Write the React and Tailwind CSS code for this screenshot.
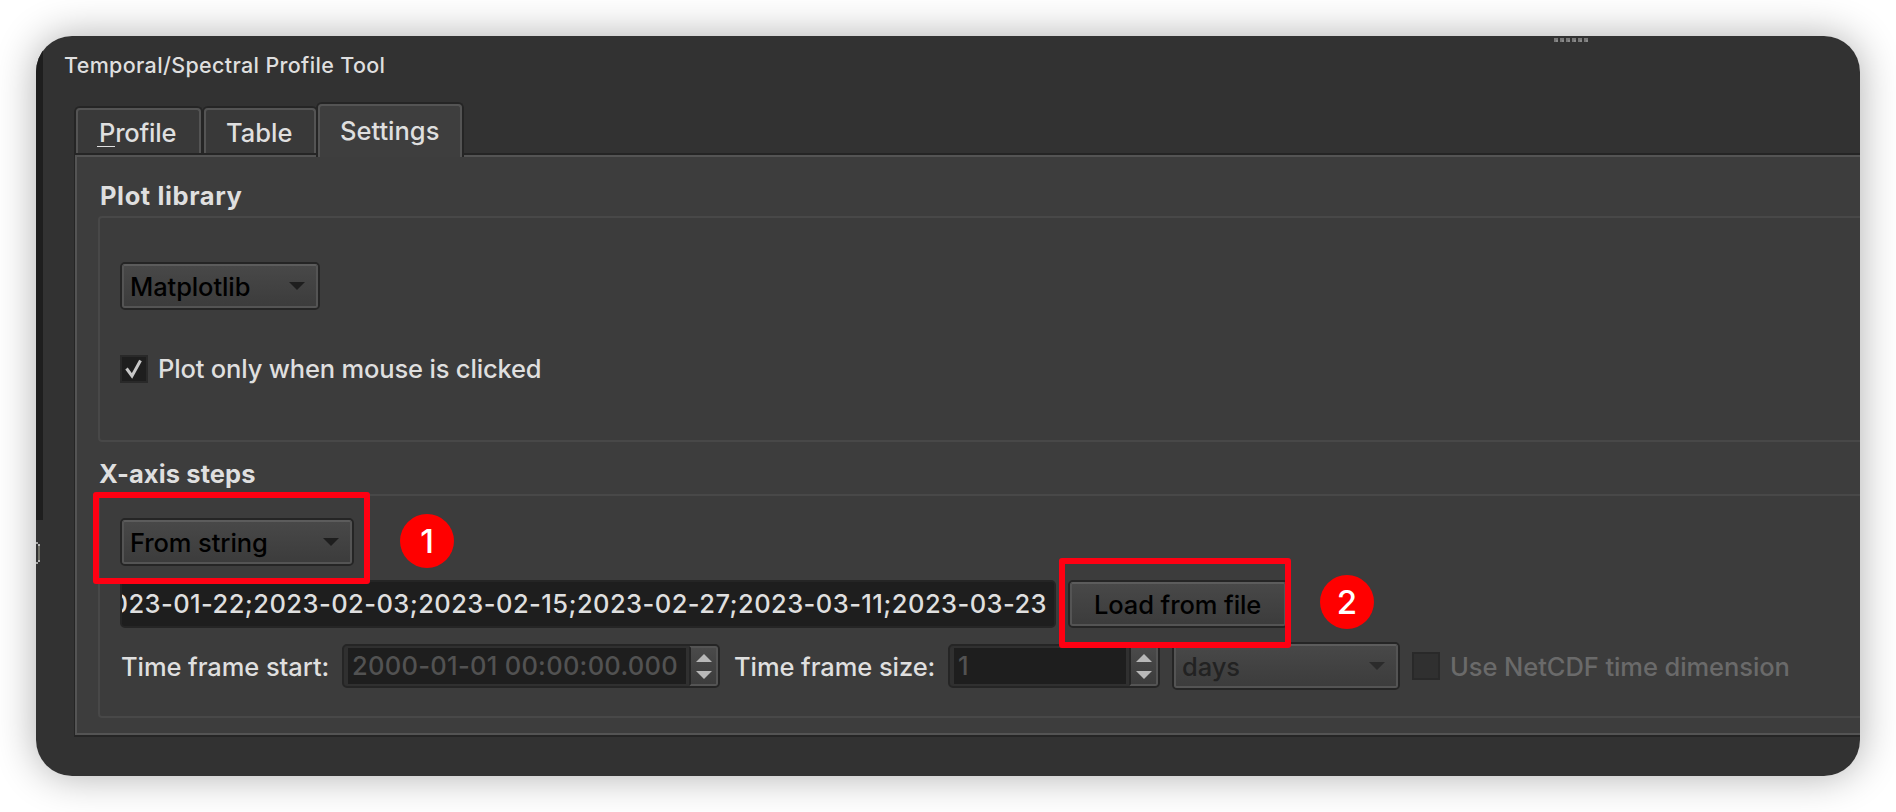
const cx = (...parts) => parts.filter(Boolean).join(" ");

function Arrow({ up, className }) {
  return (
    <svg viewBox="0 0 16 8" className={cx("block h-2 w-4 shrink-0", className)} fill="currentColor">
      <path d={up ? "M0 8L8 0L16 8Z" : "M0 0H16L8 8Z"} />
    </svg>
  );
}

function Raised({ className, children }) {
  return (
    <div className={cx("h-12 shrink-0 rounded-[5px] border-2 border-[#252525]", className)}>
      <div className="flex h-full items-center rounded-[3px] border-2 border-[#545454] border-t-[#5c5c5c] bg-linear-to-b from-[#484848] to-[#3c3c3c]">
        {children}
      </div>
    </div>
  );
}

function Combo({ className, textClass, arrowClass, children }) {
  return (
    <Raised className={className}>
      <span className={cx("mt-px grow pl-[6px] tracking-[-0.1px]", textClass)}>{children}</span>
      <Arrow className={cx("-mt-px mr-[11px]", arrowClass)} />
    </Raised>
  );
}

function Spin({ className, children }) {
  return (
    <div className={cx("flex h-11 shrink-0 rounded-[5px] border-2 border-[#252525] bg-[#303030]", className)}>
      <div className="my-0.5 ml-1 mr-[3px] flex grow items-center bg-[#1e1e1e] pl-1">
        <span className="tracking-[0.28px] text-[#525252]">{children}</span>
      </div>
      <div className="flex w-[29px] flex-col items-center rounded-r-[3px] border-2 border-[#545454] border-l-[#252525] bg-linear-to-b from-[#4a4a4a] to-[#3c3c3c] pt-1.5 text-[#b8b8b8]">
        <Arrow up />
        <Arrow className="mt-[9px]" />
      </div>
    </div>
  );
}

function Tab({ className, children }) {
  return (
    <div className={cx("rounded-t-[6px] border-2 border-b-0 border-[#252525]", className)}>
      <div className="h-full rounded-t-[4px] border-2 border-b-0 border-[#545454]">{children}</div>
    </div>
  );
}

function Marker({ className, children }) {
  return (
    <div className={cx("flex size-[54px] shrink-0 items-center justify-center rounded-full bg-[#ff0000] text-[33px] leading-none font-medium text-white", className)}>
      {children}
    </div>
  );
}

export default function App() {
  return (
    <div className="h-[812px] w-[1896px] overflow-hidden bg-white p-9 font-['Inter',sans-serif] text-[25.5px] leading-[30px] font-[450] whitespace-nowrap text-[#dfdfdf]">
      <div className="h-[740px] rounded-[36px] shadow-[0_0_40px_rgba(0,0,0,0.32)]">
        <div className="relative flex h-full overflow-hidden rounded-[36px] bg-[#323232]">
          <div className="w-[7px] shrink-0">
            <div className="h-[484px] bg-[#1e1e1e]" />
            <svg viewBox="0 0 4 22" className="mt-[22px] h-[22px] w-1">
              <path d="M0 0H2V2H0ZM0 20H2V22H0Z" fill="#a5a5a5" />
              <path d="M2 2H4V4H2ZM2 18H4V20H2Z" fill="#b5b5b5" />
              <path d="M2 4H4V18H2Z" fill="#6f6f66" />
            </svg>
          </div>
          <div className="min-w-0 grow">
            <div className="flex h-[66px] items-start justify-between">
              <h1 className="mt-[14px] ml-[21px] text-[21.5px] font-[450] tracking-[0.34px]">Temporal/Spectral Profile Tool</h1>
              <div className="mt-0.5 mr-[272px] flex gap-0.5">
                {[0, 1, 2, 3, 4, 5].map((i) => (
                  <span key={i} className="size-1 border-t-2 border-l-2 border-[#777] bg-[#8a8a8a]" />
                ))}
              </div>
            </div>

            <div className="ml-[31px] flex h-[51px] items-end">
              <Tab className="h-[47px] w-[129px] bg-[#393939]">
                <div className="flex pt-[8px] pl-[21px] tracking-[-0.2px]">
                  <span className="h-[30px]">
                    <span className="-ml-0.5 block h-[29px] border-b border-[#dfdfdf] pl-0.5">P</span>
                  </span>
                  rofile
                </div>
              </Tab>
              <Tab className="-ml-px h-[47px] w-[116px] bg-[#393939]">
                <div className="pt-[8px] pl-[20px]">Table</div>
              </Tab>
              <Tab className="relative -mb-1 -ml-0.5 h-[55px] w-[148px] bg-[#3e3e3e]">
                <div className="pt-[10px] pl-[20px]">Settings</div>
              </Tab>
            </div>

            <div className="ml-[31px] h-[584px] w-[1900px] border-y-2 border-l border-[#252525] bg-[#3d3d3d]">
              <div className="h-full border-2 border-[#545454] pl-[21px]">
                <h2 className="h-[59px] pt-[24px] pl-[2px] font-bold tracking-[0.6px]">Plot library</h2>
                <section className="h-[226px] rounded border-2 border-[#484848] bg-[#3c3c3c] pl-5">
                  <Combo className="mt-11 w-[200px]" textClass="text-black" arrowClass="text-[#1e1e1e]">Matplotlib</Combo>
                  <div className="mt-11 flex items-center">
                    <span className="flex size-7 items-center justify-center border-2 border-[#292929] bg-[#1e1e1e]">
                      <svg viewBox="0 0 18 20" className="h-5 w-[18px]" fill="none" stroke="#c8c8c8" strokeWidth="3">
                        <path d="M1.5 9.5L7 17L15.5 1.5" />
                      </svg>
                    </span>
                    <span className="ml-[10px] tracking-[-0.17px]">Plot only when mouse is clicked</span>
                  </div>
                </section>
                <h2 className="h-[52px] pt-[17px] pl-px font-bold tracking-[0.1px]">X-axis steps</h2>
                <section className="h-[224px] rounded border-2 border-[#484848] bg-[#3c3c3c] pl-5">
                  <div className="flex h-[84px] items-start pt-[17px]">
                    <Combo className="mt-[5px] w-[234px]" textClass="text-black" arrowClass="text-[#1e1e1e]">From string</Combo>
                    <Marker className="mt-px ml-[46px]">1</Marker>
                  </div>
                  <div className="flex h-12 items-center">
                    <div className="flex h-12 w-[936px] items-center justify-end overflow-hidden rounded-[5px] border-2 border-[#252525] bg-[#1e1e1e] pr-[7px] tracking-[0.43px]">
                      2023-01-22;2023-02-03;2023-02-15;2023-02-27;2023-03-11;2023-03-23
                    </div>
                    <Raised className="ml-3 w-[220px]">
                      <span className="mt-px pl-[22px] tracking-[-0.1px] text-black">Load from file</span>
                    </Raised>
                    <Marker className="-mt-1 ml-8">2</Marker>
                  </div>
                  <div className="mt-[14px] flex h-12 items-center">
                    <span className="w-[222px] pt-0.5 pl-px tracking-[-0.08px]">Time frame start:</span>
                    <Spin className="w-[378px]">2000-01-01 00:00:00.000</Spin>
                    <span className="w-[228px] pt-0.5 pl-[14px] tracking-[-0.08px]">Time frame size:</span>
                    <Spin className="w-[212px]">1</Spin>
                    <Combo className="ml-3 w-[228px]" textClass="text-[#222]" arrowClass="text-[#2b2b2b]">days</Combo>
                    <span className="ml-3 size-7 border-2 border-[#292929] bg-[#303030]" />
                    <span className="ml-[10px] pt-0.5 tracking-[-0.08px] text-[#6a6a6a]">Use NetCDF time dimension</span>
                  </div>
                </section>
              </div>
            </div>
          </div>
          <div className="absolute top-[456px] left-[57px] h-[92px] w-[277px] rounded-[3px] border-6 border-[#ff0012]" />
          <div className="absolute top-[522px] left-[1023px] h-[90px] w-[232px] rounded-[3px] border-6 border-[#ff0012]" />
        </div>
      </div>
    </div>
  );
}
